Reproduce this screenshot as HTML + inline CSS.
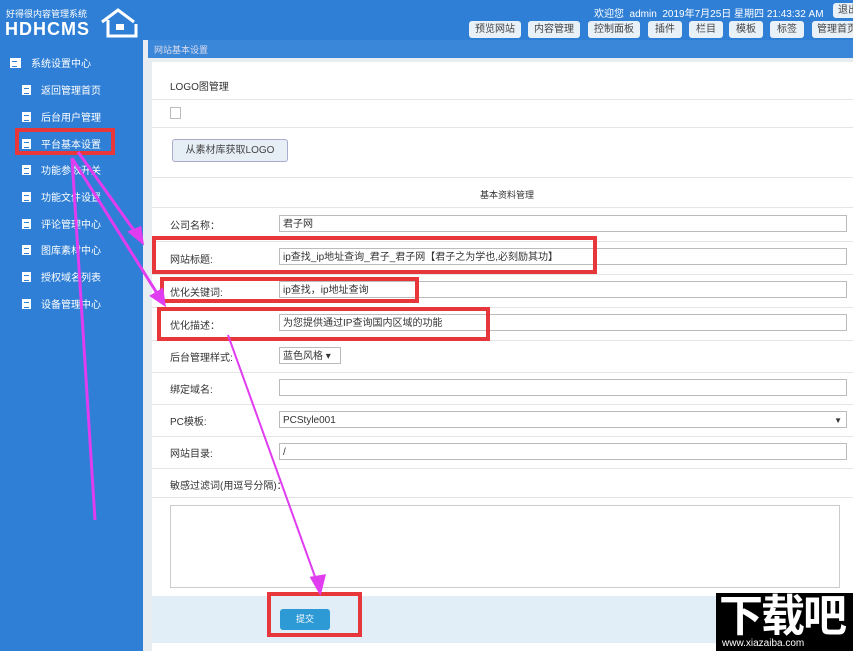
<!DOCTYPE html>
<html><head><meta charset="utf-8"><style>
*{margin:0;padding:0;box-sizing:border-box}
body{width:853px;height:651px;overflow:hidden;font-family:"Liberation Sans","Noto Sans CJK SC",sans-serif;font-size:10px;color:#333;background:#e8edf2;position:relative}
.abs{position:absolute}
#top{left:0;top:0;width:853px;height:40px;background:#2f7fd6}
#side{left:0;top:40px;width:143px;height:611px;background:#2f7fd6}
.nav{position:absolute;left:22px;color:#fff;font-size:10px}
.nav i{display:inline-block;width:9px;height:10px;background:#fff;margin-right:10px;vertical-align:-1px;position:relative}
.nav i:after{content:"";position:absolute;left:2px;top:3px;width:5px;height:4px;border-top:1px solid #2f7fd6;border-bottom:1px solid #2f7fd6}
.btn{position:absolute;top:21px;height:17px;background:#e8f0f8;border-radius:3px;font-size:10px;color:#444;line-height:17px;text-align:center}
.lab{position:absolute;left:170px;font-size:10px;color:#333}
.inp{position:absolute;left:279px;width:568px;height:17px;border:1px solid #bbb;background:#fff;font-size:10px;line-height:16px;padding-left:3px;padding-top:1px}
.hr{position:absolute;left:152px;width:701px;height:1px;background:#e5e5e5}
.red{position:absolute;border:4px solid #e8373a}
</style></head><body>
<div id="top" class="abs"></div>
<div class="abs" style="left:6px;top:7px;color:#fff;font-size:9px">好得很内容管理系统</div>
<div class="abs" style="left:5px;top:20px;color:#fff;font-size:18px;font-weight:900;letter-spacing:1px;line-height:18px">HDHCMS</div>
<svg class="abs" style="left:100px;top:8px" width="38" height="30"><path d="M2 14 L18 2 L34 14 M8 12 V28 H36 V16" stroke="#fff" stroke-width="3" fill="none"/><rect x="16" y="16" width="8" height="6" fill="#fff"/></svg>
<div class="abs" style="left:594px;top:5px;color:#fff;font-size:10px">欢迎您 &nbsp;admin &nbsp;2019年7月25日 星期四 21:43:32 AM</div>
<div class="btn" style="left:833px;top:3px;width:30px;height:15px;line-height:15px">退出</div>
<div class="btn" style="left:469px;width:52px">预览网站</div>
<div class="btn" style="left:528px;width:52px">内容管理</div>
<div class="btn" style="left:588px;width:52px">控制面板</div>
<div class="btn" style="left:648px;width:34px">插件</div>
<div class="btn" style="left:689px;width:34px">栏目</div>
<div class="btn" style="left:729px;width:34px">模板</div>
<div class="btn" style="left:770px;width:34px">标签</div>
<div class="btn" style="left:812px;width:50px">管理首页</div>
<div id="side" class="abs"></div>
<div class="nav" style="left:10px;top:55px"><i style="width:11px"></i>系统设置中心</div>
<div class="nav" style="top:82px"><i></i>返回管理首页</div>
<div class="nav" style="top:109px"><i></i>后台用户管理</div>
<div class="nav" style="top:136px"><i></i>平台基本设置</div>
<div class="nav" style="top:162px"><i></i>功能参数开关</div>
<div class="nav" style="top:189px"><i></i>功能文件设置</div>
<div class="nav" style="top:216px"><i></i>评论管理中心</div>
<div class="nav" style="top:242px"><i></i>图库素材中心</div>
<div class="nav" style="top:269px"><i></i>授权域名列表</div>
<div class="nav" style="top:296px"><i></i>设备管理中心</div>
<div class="abs" style="left:148px;top:40px;width:705px;height:18px;background:#3a86d8;color:#dde;font-size:9px;padding:3px 6px">网站基本设置</div>
<div class="abs" style="left:152px;top:62px;width:701px;height:589px;background:#fff"></div>
<div class="lab" style="top:78px">LOGO图管理</div>
<div class="hr" style="top:99px"></div>
<div class="abs" style="left:170px;top:107px;width:11px;height:12px;border:1px solid #bbb"></div>
<div class="hr" style="top:127px"></div>
<div class="abs" style="left:172px;top:139px;width:116px;height:23px;background:#e6eef6;border:1px solid #aac;border-radius:3px;font-size:10px;text-align:center;line-height:21px;color:#444">从素材库获取LOGO</div>
<div class="hr" style="top:177px"></div>
<div class="abs" style="left:480px;top:188px;font-size:9px">基本资料管理</div>
<div class="hr" style="top:207px"></div>
<div class="lab" style="top:217px">公司名称：</div><div class="inp" style="top:215px">君子网</div>
<div class="lab" style="top:251px">网站标题:</div><div class="inp" style="top:248px">ip查找_ip地址查询_君子_君子网【君子之为学也,必刻励其功】</div>
<div class="lab" style="top:284px">优化关键词:</div><div class="inp" style="top:281px">ip查找，ip地址查询</div>
<div class="lab" style="top:317px">优化描述：</div><div class="inp" style="top:314px">为您提供通过IP查询国内区域的功能</div>
<div class="lab" style="top:349px">后台管理样式:</div><div class="inp" style="top:347px;width:62px">蓝色风格 ▾</div>
<div class="lab" style="top:381px">绑定域名:</div><div class="inp" style="top:379px"></div>
<div class="lab" style="top:413px">PC模板:</div><div class="inp" style="top:411px">PCStyle001<span style="float:right;margin-right:4px;font-size:8px">▼</span></div>
<div class="lab" style="top:445px">网站目录:</div><div class="inp" style="top:443px">/</div>
<div class="lab" style="top:477px">敏感过滤词(用逗号分隔)：</div>
<div class="hr" style="top:241px"></div><div class="hr" style="top:274px"></div><div class="hr" style="top:307px"></div><div class="hr" style="top:340px"></div><div class="hr" style="top:372px"></div><div class="hr" style="top:404px"></div><div class="hr" style="top:436px"></div><div class="hr" style="top:468px"></div><div class="hr" style="top:497px"></div>
<div class="abs" style="left:170px;top:505px;width:670px;height:83px;border:1px solid #ccc"></div>
<div class="abs" style="left:152px;top:596px;width:701px;height:47px;background:#e1edf7"></div>
<div class="abs" style="left:280px;top:609px;width:50px;height:21px;background:#2d9ad6;border-radius:3px;color:#fff;font-size:9px;text-align:center;line-height:21px">提交</div>
<div class="red" style="left:15px;top:128px;width:100px;height:27px"></div>
<div class="red" style="left:152px;top:236px;width:445px;height:38px"></div>
<div class="red" style="left:160px;top:277px;width:259px;height:26px"></div>
<div class="red" style="left:157px;top:307px;width:333px;height:34px"></div>
<div class="red" style="left:267px;top:592px;width:95px;height:45px"></div>
<svg class="abs" style="left:0;top:0" width="853" height="651"><g stroke="#e03cf0" stroke-width="3" fill="#e03cf0">
<line x1="78" y1="152" x2="138" y2="236"/><polygon points="142,242 130,232 140,228"/>
<line x1="72" y1="158" x2="95" y2="520"/>
<line x1="72" y1="158" x2="160" y2="298"/><polygon points="164,304 152,296 162,290"/>
<line x1="228" y1="335" x2="318" y2="585" stroke-width="2"/><polygon points="320,592 312,578 324,576"/>
</g></svg>
<div class="abs" style="left:716px;top:593px;width:137px;height:58px;background:#000"></div>
<div class="abs" style="left:719px;top:587px;font-size:44px;font-weight:bold;color:#fff;letter-spacing:-2px;font-family:'Noto Sans CJK SC',sans-serif;line-height:50px">下载吧</div>
<div class="abs" style="left:722px;top:638px;font-size:10px;color:#fff">www.xiazaiba.com</div>
</body></html>
